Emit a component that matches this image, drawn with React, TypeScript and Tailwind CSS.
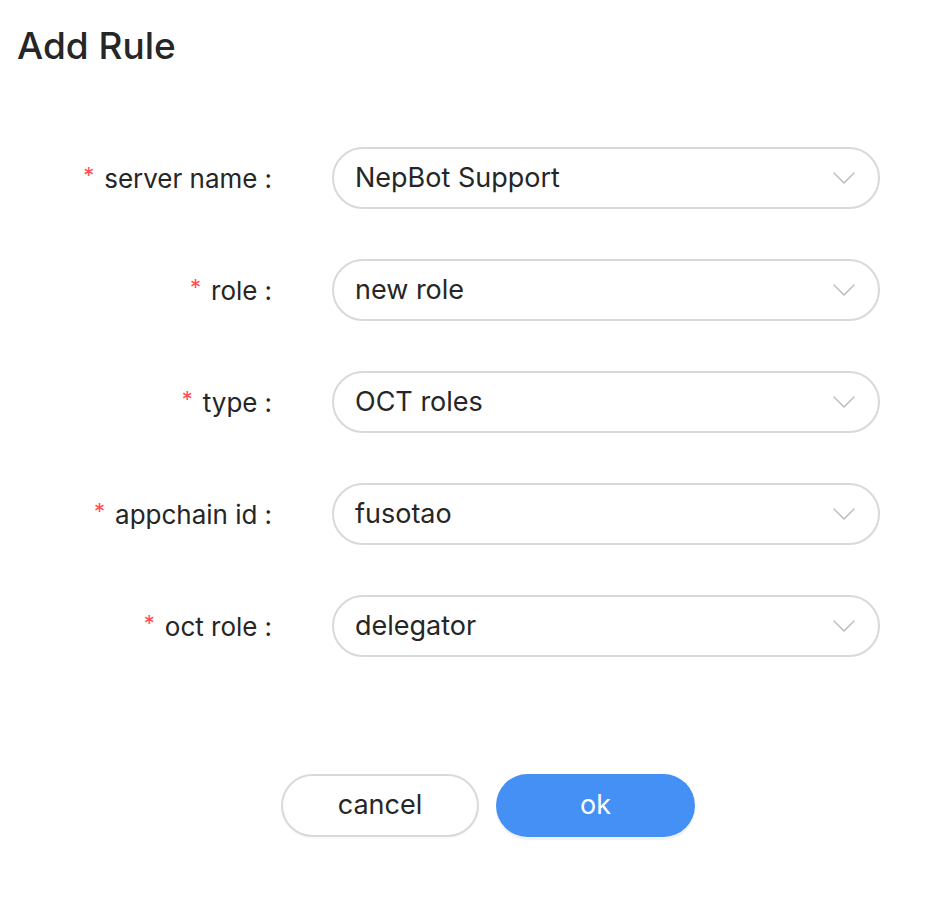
const fields = [
  { label: 'server name', value: 'NepBot Support' },
  { label: 'role', value: 'new role' },
  { label: 'type', value: 'OCT roles' },
  { label: 'appchain id', value: 'fusotao' },
  { label: 'oct role', value: 'delegator' },
]

function Chevron() {
  return (
    <svg width="22" height="12" viewBox="0 0 22 12" fill="none" className="mr-[1px]">
      <polyline points="1,1 11,11 21,1" stroke="#bfbfbf" strokeWidth="1.6" strokeLinejoin="round" strokeLinecap="round" />
    </svg>
  )
}

function Field({ label, value }: { label: string; value: string }) {
  return (
    <div className="flex items-center h-[62px]">
      <div className="w-[276px] flex items-center justify-end text-[26px] text-[#262626]">
        <span className="text-[#ff4d4f] text-[22px] mr-[10px] -mt-[6px]">*</span>
        <span>{label}</span>
        <span className="ml-[7px] mr-[4px]">:</span>
      </div>
      <div className="ml-[56px] w-[548px] h-[62px] rounded-full border-2 border-[#d9d9d9] bg-white flex items-center justify-between pl-[21px] pr-[22px]">
        <span className="text-[27px] text-[#262626]">{value}</span>
        <Chevron />
      </div>
    </div>
  )
}

export default function App() {
  return (
    <div className="w-[942px] h-[898px] bg-white font-['Inter','Liberation_Sans',sans-serif]">
      <h1 className="pl-[17px] pt-[22px] text-[37px] leading-[48px] font-medium text-[#262626]">
        Add Rule
      </h1>
      <div className="mt-[77px] flex flex-col gap-[50px]">
        {fields.map((f) => (
          <Field key={f.label} {...f} />
        ))}
      </div>
      <div className="mt-[117px] flex pl-[281px] gap-[17px]">
        <button className="w-[198px] h-[63px] rounded-full border-2 border-[#d9d9d9] bg-white text-[27px] text-[#262626] shadow-[0_2px_0_rgba(0,0,0,0.02)]">
          cancel
        </button>
        <button className="w-[199px] h-[63px] rounded-full bg-[#4490f5] text-[27px] text-white shadow-[0_3px_0_rgba(0,0,0,0.05)]">
          ok
        </button>
      </div>
    </div>
  )
}
